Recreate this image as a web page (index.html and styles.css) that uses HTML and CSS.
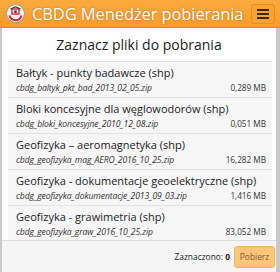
FILE: index.html
```html
<!DOCTYPE html>
<html>
<head>
<meta charset="utf-8">
<link rel="stylesheet" href="styles.css">
</head>
<body>
<div class="app">
  <header class="bar">
    <svg class="logo" width="19" height="19" viewBox="0 0 19 19">
      <circle cx="9.5" cy="9.5" r="9" fill="#f2f2f2" stroke="#9a9a9a" stroke-width="1"/>
      <path d="M3.5 11.5 A6.2 6.2 0 0 0 15.5 11.5" fill="none" stroke="#d9262b" stroke-width="2"/>
      <rect x="6" y="5" width="7" height="5" fill="none" stroke="#d9262b" stroke-width="1.4"/>
      <path d="M4.5 5 L9.5 2.8 L14.5 5" fill="none" stroke="#333" stroke-width="1.2"/>
      <rect x="8.3" y="6.5" width="2.4" height="2.4" fill="#333"/>
    </svg>
    <span class="brand">CBDG Menedżer pobierania</span>
    <button class="menu"><span></span><span></span><span></span></button>
  </header>
  <main class="panel">
    <h1 class="heading">Zaznacz pliki do pobrania</h1>
    <ul class="list">
      <li class="item"><div class="name">Bałtyk - punkty badawcze (shp)</div><div class="meta"><span class="file">cbdg_baltyk_pkt_bad_2013_02_05.zip</span><span class="size">0,289 MB</span></div></li>
      <li class="item"><div class="name">Bloki koncesyjne dla węglowodorów (shp)</div><div class="meta"><span class="file">cbdg_bloki_koncesyjne_2010_12_08.zip</span><span class="size">0,051 MB</span></div></li>
      <li class="item"><div class="name">Geofizyka – aeromagnetyka (shp)</div><div class="meta"><span class="file">cbdg_geofizyka_mag_AERO_2016_10_25.zip</span><span class="size">16,282 MB</span></div></li>
      <li class="item"><div class="name">Geofizyka - dokumentacje geoelektryczne (shp)</div><div class="meta"><span class="file">cbdg_geofizyka_dokumentacje_2013_09_03.zip</span><span class="size">1,416 MB</span></div></li>
      <li class="item"><div class="name">Geofizyka - grawimetria (shp)</div><div class="meta"><span class="file">cbdg_geofizyka_graw_2016_10_25.zip</span><span class="size">83,052 MB</span></div></li>
    </ul>
    <footer class="foot">
      <span class="count">Zaznaczono: <b>0</b></span>
      <button class="download">Pobierz</button>
    </footer>
  </main>
</div>
</body>
</html>
```
FILE: styles.css
```css
* { box-sizing: border-box; }
html, body { margin: 0; padding: 0; }
body {
  width: 280px; height: 272px; overflow: hidden;
  background: #c9c9c9;
  font-family: "Open Sans", "DejaVu Sans", sans-serif;
  color: #222;
}
.app { display: flex; flex-direction: column; height: 272px; }
.bar {
  height: 28px; flex: none;
  background: linear-gradient(#fbaa3e, #f79c2b);
  display: flex; align-items: center;
  padding: 0 5px 0 6px;
  border-bottom: 1px solid #e08a1e;
}
.logo { flex: none; }
.brand {
  margin-left: 7px; flex: 1;
  color: #fff; font-size: 16.5px; white-space: nowrap;
  text-shadow: 0 0 2px rgba(120,60,0,.55);
  letter-spacing: -0.1px;
}
.menu {
  width: 24px; height: 20px; padding: 0;
  background: #f9a232; border: 1px solid #e88f1a; border-radius: 3px;
  display: flex; flex-direction: column; align-items: center; justify-content: center; gap: 2px;
}
.menu span { display: block; width: 12px; height: 2px; background: #3a2a10; }
.panel {
  flex: 1; margin: 0 4px 0 2px;
  background: #fff;
  display: flex; flex-direction: column;
  min-height: 0;
}
.heading {
  margin: 0; font-weight: normal; font-size: 14px; text-align: center;
  line-height: 20px; padding: 7px 0 6px; color: #222;
}
.list {
  list-style: none; margin: 0 4px 0 6px; padding: 0;
  flex: 1; overflow: hidden;
}
.item {
  background: #f6f6f6;
  border-top: 1px solid #e2e2e2;
  padding: 3px 6px 5px 8px;
  height: 36px;
}
.name { font-size: 11px; line-height: 16px; color: #222; white-space: nowrap; }
.meta { display: flex; justify-content: space-between; align-items: baseline; line-height: 13px; }
.file { font-size: 8.6px; font-style: italic; color: #333; white-space: nowrap; letter-spacing: -0.1px; }
.size { font-size: 8.2px; color: #333; }
.foot {
  height: 32px; flex: none;
  background: #f5f5f5; border-top: 1px solid #dcdcdc;
  display: flex; align-items: center; justify-content: flex-end;
  padding: 0 1px 0 0; gap: 4px;
}
.count { font-size: 8.4px; color: #222; }
.count b { font-weight: bold; }
.download {
  height: 22px; width: 41px; padding: 0;
  background: #fcc57a; border: 1px solid #f7b45c; border-radius: 3px;
  color: #7a5a30; font-family: inherit; font-size: 8.4px;
}
```
